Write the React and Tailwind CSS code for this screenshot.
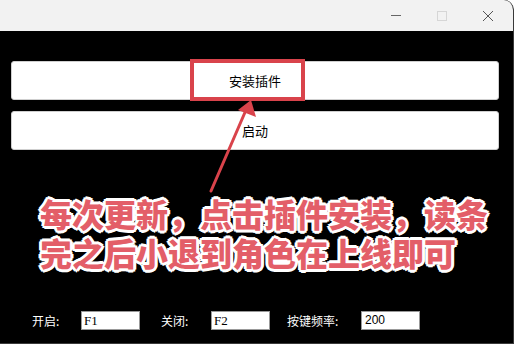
export default function App() {
  const outline =
    '[text-shadow:2px_0_0_#fff,-2px_0_0_#fff,0_2px_0_#fff,0_-2px_0_#fff,2px_2px_0_#fff,-2px_-2px_0_#fff,2px_-2px_0_#fff,-2px_2px_0_#fff,3px_0_0_#fff,-3px_0_0_#fff,0_3px_0_#fff,0_-3px_0_#fff]';

  return (
    <div
      className="relative w-[514px] h-[344px] bg-black overflow-hidden rounded-tr-[10px] flex flex-col border-b border-r border-[#3a3a3a]"
      style={{ fontFamily: '"Noto Sans CJK SC", "Liberation Sans", sans-serif' }}
    >
      {/* title bar */}
      <div className="h-[31px] shrink-0 bg-[#f2f2f2] flex items-center justify-end text-[#555]">
        <div className="w-[46px] flex justify-center">
          <div className="w-[10px] h-px bg-[#666]" />
        </div>
        <div className="w-[46px] flex justify-center">
          <div className="w-[10px] h-[10px] border border-[#d6d6d6]" />
        </div>
        <div className="w-[46px] flex justify-center mr-[2px]">
          <svg width="12" height="12" viewBox="0 0 12 12">
            <path d="M1 1L11 11M11 1L1 11" stroke="#555" strokeWidth="1" fill="none" />
          </svg>
        </div>
      </div>

      {/* buttons */}
      <div className="flex flex-col gap-[11px] px-[11px] pr-[14px] pt-[30px]">
        <div className="h-[39px] bg-white border border-[#cfcfcf] rounded-[3px] flex items-center justify-center text-[13px] text-black">
          安装插件
        </div>
        <div className="h-[39px] bg-white border border-[#cfcfcf] rounded-[3px] flex items-center justify-center text-[13px] text-black">
          启动
        </div>
      </div>

      {/* note */}
      <div
        className={`mt-[44px] pl-[40px] text-[32px] leading-[39px] font-black text-[#e35e68] tracking-[0px] ${outline}`}
      >
        <div>每次更新，点击插件安装，读条</div>
        <div>完之后小退到角色在上线即可</div>
      </div>

      {/* bottom settings */}
      <div className="mt-auto mb-[13px] flex items-center pl-[32px] text-[12px] text-white">
        <span className="w-[49px]">开启:</span>
        <div className="w-[59px] h-[19px] bg-white border border-[#999] text-black text-[13px] pl-[2px] leading-[17px]" style={{ fontFamily: '"Liberation Serif", serif' }}>
          F1
        </div>
        <span className="ml-[21px] w-[50px]">关闭:</span>
        <div className="w-[59px] h-[19px] bg-white border border-[#999] text-black text-[13px] pl-[2px] leading-[17px]" style={{ fontFamily: '"Liberation Serif", serif' }}>
          F2
        </div>
        <span className="ml-[17px] w-[74px]">按键频率:</span>
        <div className="w-[59px] h-[19px] bg-white border border-[#999] text-black text-[12px] pl-[3px] leading-[17px]" style={{ fontFamily: '"Liberation Sans", sans-serif' }}>
          200
        </div>
      </div>

      {/* annotation box */}
      <div className="absolute left-[190px] top-[59px] w-[115px] h-[42px] border-[4px] border-[#d9434b]" />

      {/* annotation arrow */}
      <svg className="absolute left-0 top-0" width="514" height="344" viewBox="0 0 514 344">
        <line x1="211" y1="191" x2="246" y2="110" stroke="#d9434b" strokeWidth="3" strokeLinecap="round" />
        <polygon points="251,100 256,117 238,110" fill="#d9434b" />
      </svg>
    </div>
  );
}
